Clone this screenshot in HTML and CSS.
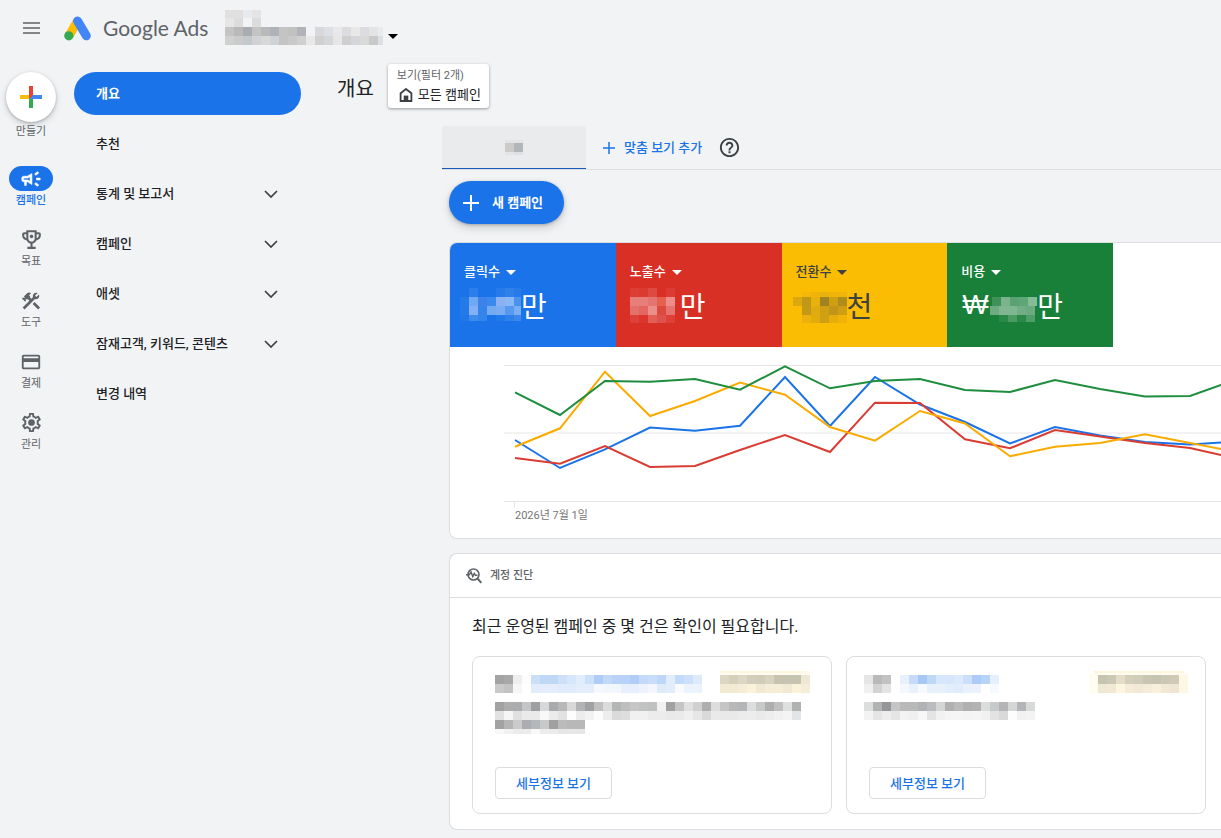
FILE: index.html
```html
<!DOCTYPE html>
<html lang="ko">
<head>
<meta charset="utf-8">
<meta name="viewport" content="width=device-width, initial-scale=1">
<title>개요 - Google Ads</title>
<link rel="stylesheet" href="styles.css">
</head>
<body>
<header class="topbar">
  <button class="icon-button" aria-label="메뉴">
    <svg width="18" height="12" viewBox="0 0 18 12"><path d="M0 1h17M0 6h17M0 11h17" stroke="#5f6368" stroke-width="1.6"/></svg>
  </button>
  <a class="brand" href="#">
    <svg width="28" height="25" viewBox="0 0 28 25">
      <path d="M5 20 13.5 5" stroke="#fbbc04" stroke-width="9"/>
      <path d="M13.6 5 22.3 19.8" stroke="#4285f4" stroke-width="9" stroke-linecap="round"/>
      <circle cx="4.8" cy="19.8" r="4.6" fill="#34a853"/>
    </svg>
    <span class="brand-name">Google Ads</span>
  </a>
  <button class="account" aria-label="계정">
    <svg class="mosaic" width="158" height="36" data-rows="0 0 8 e0 e0 e8ebee e4; 0 8 9 e6 dc - dc; 0 17 9 c4 b9 a9adb2 c4 b9 afb2b8 c4 c1 b1b3b9 - d8d8dc dcdfe4 e8 dcdce0 e8 dcdce0 e4 e8ebee; 0 26 9 d0 cb c3c8cb d0d2d6 d8 d0d3d6 c4 c9 d0 e8 d0 d4d7da e6 cf d5d6da d9 c9 dde0e3"></svg>
    <span class="caret"></span>
  </button>
</header>

<div class="shell">
  <nav class="rail" aria-label="기본 메뉴">
    <a class="rail-create" href="#">
      <span class="fab">
        <svg width="22" height="22" viewBox="0 0 22 22"><path fill="#ea4335" d="M9 0h4v11l-4 2z"/><path fill="#fbbc04" d="M0 9h9v4H0z"/><path fill="#34a853" d="M9 13l4-3v12H9z"/><path fill="#4285f4" d="M13 9h9v4H10z"/></svg>
      </span>
      만들기
    </a>
    <a class="rail-item is-active" href="#">
      <span class="rail-icon"><svg width="22" height="22" viewBox="0 0 24 24"><path d="M18 11v2h4v-2h-4zm-2 6.61c.96.71 2.21 1.65 3.2 2.39.4-.53.8-1.07 1.2-1.6-.99-.74-2.24-1.68-3.2-2.4-.4.54-.8 1.08-1.2 1.61zM20.4 5.6c-.4-.53-.8-1.07-1.2-1.6-.99.74-2.24 1.68-3.2 2.4.4.53.8 1.07 1.2 1.6.96-.72 2.21-1.65 3.2-2.4zM4 9c-1.1 0-2 .9-2 2v2c0 1.1.9 2 2 2h1v4h2v-4h1l5 3V6L8 9H4zm5.03 1.71L11 9.53v4.94l-1.97-1.18-.48-.29H4v-2h4.55l.48-.29z" stroke="currentColor" stroke-width=".7"/></svg></span>
      캠페인
    </a>
    <a class="rail-item" href="#">
      <span class="rail-icon"><svg width="25" height="25" viewBox="0 0 24 24"><path d="M19 5h-2V3H7v2H5c-1.1 0-2 .9-2 2v1c0 2.55 1.92 4.63 4.39 4.94.63 1.5 1.98 2.63 3.61 2.96V19H8v2h8v-2h-3v-3.1c1.63-.33 2.98-1.46 3.61-2.96C19.08 12.63 21 10.55 21 8V7c0-1.1-.9-2-2-2zM5 8V7h2v3.82C5.84 10.4 5 9.3 5 8zm7 6c-1.65 0-3-1.35-3-3V5h6v6c0 1.65-1.35 3-3 3zm7-6c0 1.3-.84 2.4-2 2.82V7h2v1z"/><circle cx="12" cy="9" r="1.700"/></svg></span>
      목표
    </a>
    <a class="rail-item" href="#">
      <span class="rail-icon"><svg width="22" height="22" viewBox="0 0 24 24"><path d="m13.78 15.3 6 6 2.11-2.16-6-6zM17.5 10c1.93 0 3.5-1.57 3.5-3.5 0-.58-.16-1.12-.41-1.6l-2.7 2.7-1.49-1.49 2.7-2.7c-.48-.25-1.02-.41-1.6-.41C15.57 3 14 4.57 14 6.5c0 .41.08.8.21 1.16l-1.85 1.85-1.78-1.78.71-.71-1.41-1.41L12 3.49c-1.17-1.17-3.07-1.17-4.24 0L4.22 7.03l1.41 1.41H2.81l-.71.71 3.54 3.54.71-.71V9.15l1.41 1.41.71-.71 1.78 1.78-7.41 7.41 2.12 2.12L16.34 9.79c.36.13.75.21 1.16.21z"/></svg></span>
      도구
    </a>
    <a class="rail-item" href="#">
      <span class="rail-icon"><svg width="22" height="22" viewBox="0 0 24 24"><path d="M20 4H4c-1.11 0-1.99.89-1.99 2L2 18c0 1.11.89 2 2 2h16c1.11 0 2-.89 2-2V6c0-1.11-.89-2-2-2zm0 14H4v-6h16v6zm0-10H4V6h16v2z"/></svg></span>
      결제
    </a>
    <a class="rail-item" href="#">
      <span class="rail-icon"><svg width="23" height="23" viewBox="0 0 24 24"><path d="M19.43 12.98c.04-.32.07-.64.07-.98 0-.34-.03-.66-.07-.98l2.11-1.65c.19-.15.24-.42.12-.64l-2-3.46c-.09-.16-.26-.25-.44-.25-.06 0-.12.01-.17.03l-2.49 1c-.52-.4-1.08-.73-1.69-.98l-.38-2.65C14.46 2.18 14.25 2 14 2h-4c-.25 0-.46.18-.49.42l-.38 2.65c-.61.25-1.17.59-1.69.98l-2.49-1c-.06-.02-.12-.03-.18-.03-.17 0-.34.09-.43.25l-2 3.46c-.13.22-.07.49.12.64l2.11 1.65c-.04.32-.07.65-.07.98 0 .33.03.66.07.98l-2.11 1.65c-.19.15-.24.42-.12.64l2 3.46c.09.16.26.25.44.25.06 0 .12-.01.17-.03l2.49-1c.52.4 1.08.73 1.69.98l.38 2.65c.03.24.24.42.49.42h4c.25 0 .46-.18.49-.42l.38-2.65c.61-.25 1.17-.59 1.69-.98l2.49 1c.06.02.12.03.18.03.17 0 .34-.09.43-.25l2-3.46c.12-.22.07-.49-.12-.64l-2.11-1.65zm-1.98-1.71c.04.31.05.52.05.73 0 .21-.02.43-.05.73l-.14 1.13.89.7 1.08.84-.7 1.21-1.27-.51-1.04-.42-.9.68c-.43.32-.84.56-1.25.73l-1.06.43-.16 1.13-.2 1.35h-1.4l-.19-1.35-.16-1.13-1.06-.43c-.43-.18-.83-.41-1.23-.71l-.91-.7-1.06.43-1.27.51-.7-1.21 1.08-.84.89-.7-.14-1.13c-.03-.31-.05-.54-.05-.74s.02-.43.05-.73l.14-1.13-.89-.7-1.08-.84.7-1.21 1.27.51 1.04.42.9-.68c.43-.32.84-.56 1.25-.73l1.06-.43.16-1.13.2-1.35h1.39l.19 1.35.16 1.13 1.06.43c.43.18.83.41 1.23.71l.91.7 1.06-.43 1.27-.51.7 1.21-1.07.85-.89.7.14 1.13z"/><circle cx="12" cy="12" r="3.5"/></svg></span>
      관리
    </a>
  </nav>

  <nav class="sections" aria-label="캠페인 메뉴">
    <a class="section is-active" href="#">개요</a>
    <a class="section" href="#">추천</a>
    <a class="section" href="#">통계 및 보고서 <svg class="chevron" width="14" height="8" viewBox="0 0 14 8"><path d="m1 1 6 6 6-6"/></svg></a>
    <a class="section" href="#">캠페인 <svg class="chevron" width="14" height="8" viewBox="0 0 14 8"><path d="m1 1 6 6 6-6"/></svg></a>
    <a class="section" href="#">애셋 <svg class="chevron" width="14" height="8" viewBox="0 0 14 8"><path d="m1 1 6 6 6-6"/></svg></a>
    <a class="section" href="#">잠재고객, 키워드, 콘텐츠 <svg class="chevron" width="14" height="8" viewBox="0 0 14 8"><path d="m1 1 6 6 6-6"/></svg></a>
    <a class="section" href="#">변경 내역</a>
  </nav>

  <main class="main">
    <div class="title-row">
      <h1 class="title">개요</h1>
      <button class="view-chip">
        <span class="view-caption">보기(필터 2개)</span>
        <span class="view-name">
          <svg width="14" height="14" viewBox="0 0 14 14"><path d="M1.6 13V5.200L7 1l5.400 4.200V13z" fill="none" stroke="#3c4043" stroke-width="1.800"/><path d="M4.700 7.600h4.600V13H4.700z" fill="#3c4043"/></svg>
          모든 캠페인
        </span>
      </button>
    </div>

    <div class="content">
      <div class="tabs">
        <button class="tab" aria-label="보기 1">
          <svg class="mosaic" width="18" height="15" data-rows="0 0 3 e3e4e4 e2e4e5; 0 3 9 cdcbca b1b6bb; 0 12 3 e3e4e4 dde1e5"></svg>
        </button>
        <button class="add-view">
          <svg width="12" height="12" viewBox="0 0 12 12"><path d="M6 0v12M0 6h12" stroke="#1a73e8" stroke-width="1.5"/></svg>
          맞춤 보기 추가
        </button>
        <button class="icon-button" aria-label="도움말">
          <svg width="23" height="23" viewBox="0 0 24 24" fill="#3c4043"><path d="M11 18h2v-2h-2v2zm1-16C6.48 2 2 6.48 2 12s4.48 10 10 10 10-4.48 10-10S17.52 2 12 2zm0 18c-4.41 0-8-3.59-8-8s3.59-8 8-8 8 3.59 8 8-3.59 8-8 8zm0-14c-2.21 0-4 1.79-4 4h2c0-1.1.9-2 2-2s2 .9 2 2c0 2-3 1.75-3 5h2c0-2.25 3-2.5 3-5 0-2.21-1.79-4-4-4z"/></svg>
        </button>
      </div>

      <div class="panels">
        <button class="new-campaign">
          <svg width="16" height="16" viewBox="0 0 16 16"><path d="M8 0v16M0 8h16" stroke="#fff" stroke-width="2"/></svg>
          새 캠페인
        </button>

        <section class="card">
          <div class="metrics">
            <div class="metric metric-blue">
              <button class="metric-name">클릭수 <span class="caret"></span></button>
              <div class="metric-value">
                <svg class="mosaic" width="61" height="36" data-rows="0 1 9 - 2c7eea - - 267aea 3080eb 267aea; 0 10 9 257ae9 70a9f3 3c82ea 3a8aee 8cb1f3 88b8f5 4a92ee; 0 19 9 257ae9 84b1f4 3583eb 73aaf2 79acf2 5799ef 79aef3; 0 28 6 2177e9 3f8aed 3384ec - 2279e9 3080ec 3b87ec"></svg>만
              </div>
            </div>
            <div class="metric metric-red">
              <button class="metric-name">노출수 <span class="caret"></span></button>
              <div class="metric-value">
                <svg class="mosaic" width="54" height="36" data-rows="4 1 9 dc3d35 db3a31 de4941 - dc3b33; 4 10 9 e77e79 e77e79 e57470 e5604f ec8d8a; 4 19 9 e4706a e36660 ec8f88 dd4841 e57470; 4 28 9 dc4038 db352c e25f57 df524b dc4038"></svg>만
              </div>
            </div>
            <div class="metric metric-yellow">
              <button class="metric-name">전환수 <span class="caret"></span></button>
              <div class="metric-value">
                <svg class="mosaic" width="55" height="36" data-rows="1 5 5 - f4b809 f0b30a eab20f f0b30a f0b50a; 1 10 9 dca80f c19716 e8b10c a08320 cf9f13 af8c1c; 1 19 9 - c49915 e0ab0f d0a012 c09518 cf9f13; 1 28 8 - ecb20b e2ac0d cfa013 e5ae0d f0b30a"></svg>천
              </div>
            </div>
            <div class="metric metric-green">
              <button class="metric-name">비용 <span class="caret"></span></button>
              <div class="metric-value metric-money">
                <span class="currency">₩</span><svg class="mosaic" width="47" height="36" data-rows="2 10 9 3f915a 7bb38d 5aa272 5ea577 85bb96; 0 19 9 6dab80 80b692 80b692 72ae85 6cab80; 0 28 7 - 2a8948 4a9a63 2a8948 4f9d68"></svg>만
              </div>
            </div>
          </div>
          <div class="chart">
            <svg class="plot" viewBox="0 0 771 161" preserveAspectRatio="none" role="img" aria-label="실적 추이">
              <path class="grid-line" d="M54 18.500H771M54 86H771M54 154.500H771M64.500 154V160"/>
              <polyline stroke="#1a73e8" points="65,93 110,121 155,102.300 200,80.500 245,83.700 290,78.700 335,30 380,79 425,30 470,57.500 515,75 560,96.500 605,80 650,88.500 695,95 740,97.500 771,95.500 785,95"/>
              <polyline stroke="#d93c32" points="65,111 110,116.700 155,99 200,120 245,119 290,103 335,88 380,105 425,55.700 470,56 515,92.300 560,101.300 605,83 650,89.500 695,96 740,101 771,108 785,111"/>
              <polyline stroke="#f9ab00" points="65,99.700 110,81.300 155,24.700 200,69 245,54 290,35.500 335,47.700 380,80 425,93.700 470,64 515,76.500 560,109.300 605,99.800 650,96 695,87.300 740,96 771,102 785,104.500"/>
              <polyline stroke="#1e8e3e" points="65,45.300 110,68 155,34 200,34.700 245,32 290,42.700 335,19.300 380,41.300 425,34 470,32 515,43 560,45 605,33 650,42 695,49.500 740,49 771,38 785,33"/>
            </svg>
            <p class="chart-date">2026년 7월 1일</p>
          </div>
        </section>

        <section class="card">
          <header class="card-header">
            <svg width="18" height="17" viewBox="0 0 18 17" fill="none" stroke="#5f6368"><circle cx="8.500" cy="7.500" r="5.500" stroke-width="1.600"/><path d="m12.500 11.500 3.800 4.300" stroke-width="2"/><path d="M1 7.800h3.300L6 5 7.800 9.600 9.300 6.400 10.500 8.200H12.500" stroke-width="1.500"/></svg>
            <h2 class="card-title">계정 진단</h2>
          </header>
          <div class="card-body">
            <p class="lead">최근 운영된 캠페인 중 몇 건은 확인이 필요합니다.</p>
            <div class="issues">
              <article class="issue">
                <div class="issue-top">
                  <svg class="mosaic" width="207" height="22" data-rows="0 4 9 a3 a8 ee fc ccdff8 c0d8f8 c0d8f8 cde0f8 d6e6fb e2edfc cde0fa aeccf5 c1d8f7 b8d3f7 b8d3f7 afcdf6 c4dafa c8ddf9 bed7f8 e2edfc c4dafa cce0fa dceafc; 0 13 9 c9 c3 f6 - e2edfc e5edfc e5edfc e0ebfb e0ecfb e3edfb e3edfb f5f8fe f2f7fd f2f7fd e8effc e8effc edf3fd f3f7fd dfebfb e2edfb f8fafe ebf3fd ebf3fd"></svg>
                  <svg class="mosaic" width="90" height="22" data-rows="0 0 2 fff5dc fff5dc fff5dc fff5dc fff5dc fff5dc fff5dc fff5dc fff5dc fff8e6; 0 2 2 fffdf2 fffdf2 fffdf2 fffdf2 fffdf2 fffdf2 fffdf2 fffdf2 fffdf2 fffdf2; 0 4 9 ddd6c3 d6cfbd ddd6c3 d3cdbd cfccb8 d8d3bf c6c4b1 c6c4b1 c6c4b1 eee7d3; 0 13 9 f3ead4 f3ead4 f5edd8 faf2d9 f0e9d3 f5edd8 f5edd8 f0e9d3 faf2d9 f5edd8"></svg>
                </div>
                <svg class="mosaic issue-text" width="306" height="32" data-rows="0 0 9 a2 ad abacae c5 9e9fa1 d8 a9aaac b8 d8 b2b3b5 a0a1a3 c0 dadbdb b5 bcbebf c6 c1c3c3 c0 f1 a0a1a3 c5 e0 d0 ae dd c5 b8 b4b5b7 dcdddd c7c9c9 adaeb0 c0 dedfdf b1; 0 9 9 e2 f6 e0 ea ea f8 eb e2 fd ec f2 fc ed da dd f1 f1 ec ec e9 ea f0 e6 d9 ea e9 e9 ec ed ea ed f1 f4 e2e5e5; 0 18 9 a2 b5 cb acadb0 b5b8bb c8caca a0 bb b8 b8; 0 27 5 f8 f1 eb eb f8 ec eb e6 e8 e6"></svg>
                <button class="outline-button">세부정보 보기</button>
              </article>
              <article class="issue">
                <div class="issue-top">
                  <svg class="mosaic" width="130" height="22" data-rows="-5 4 9 e5 b9 c2 - e8f0fc c5dbf9 a5c8f5 c0d8f8 d7e6fb d7e6fb dceafc cbdffa accbf6 b7d3f8 e8effc; -5 13 9 f0 d3 e4 - f4f8fe e9f1fc f6f9fe e8f0fc e8f0fc e3edfb e0ebfb e9f1fd ebf2fd - f6f9fe"></svg>
                  <svg class="mosaic" width="94" height="22" data-rows="4 0 2 fff5dc fff5dc fff5dc fff5dc fff5dc fff5dc fff5dc fff5dc fff5dc fff5dc; -1 2 2 fffdf2 fffdf2 fffdf2 fffdf2 fffdf2 fffdf2 fffdf2 fffdf2 fffdf2 fffdf2 fffdf2; -1 4 9 fffdf0 c6c4b1 cbc8b5 e5dcc7 d3cfba cfccb7 c8c5b2 c6c4b1 cbc7b5 d0c9b6 fdf7e6; -1 13 9 fffdf0 efe8d3 f1e9d5 fdf6de f4ecd8 f0e9d3 f4ecd8 f7f1db f1e9d5 efe6d2 fdf7e6"></svg>
                </div>
                <svg class="mosaic issue-text" width="306" height="32" data-rows="-5 0 9 dd b1b2b4 959698 c5 b9 b9 b0b2b5 babcbf d5 b0 bb b0 b3 dbdcdc c7caca b4 d6 b4b5b9 d8dada; -5 9 9 f3 e5 ed e5 f3 edf0ef f7 e4 f1 f5 f5 f4 f5 f1 e3 d9 fd f1 f3"></svg>
                <button class="outline-button">세부정보 보기</button>
              </article>
            </div>
          </div>
        </section>
      </div>
    </div>
  </main>
</div>
<script src="mosaic.js"></script>
</body>
</html>
```

FILE: styles.css
```css
* {
  box-sizing: border-box;
}

body {
  margin: 0;
  overflow-x: hidden;
  background: #f1f3f5;
  color: #202124;
  font-family: Roboto, "Noto Sans CJK KR", sans-serif;
  font-size: 13px;
  line-height: 20px;
}

button {
  padding: 0;
  border: 0;
  background: none;
  color: inherit;
  font: inherit;
  cursor: pointer;
}

a {
  color: inherit;
  text-decoration: none;
}

h1,
h2,
p {
  margin: 0;
}

svg {
  display: block;
  flex: none;
}

.caret {
  border: 5px solid transparent;
  border-top-color: currentColor;
  border-bottom: 0;
}

.icon-button {
  display: flex;
}

/* Top bar */
.topbar {
  display: flex;
  align-items: center;
  height: 56px;
  padding-left: 23px;
}

.brand {
  display: flex;
  align-items: center;
  gap: 11px;
  margin-left: 23px;
}

.brand-name {
  color: #5f6368;
  font-family: Lato, sans-serif;
  font-size: 21px;
  line-height: 28px;
}

.account {
  display: flex;
  align-items: center;
  gap: 5px;
  margin-left: 17px;
  color: #000;
}

.account .caret {
  margin-top: 16px;
}

.shell {
  display: flex;
  align-items: flex-start;
}

/* Icon rail */
.rail {
  display: flex;
  flex: none;
  flex-direction: column;
  gap: 18px;
  width: 62px;
  padding-top: 16px;
  color: #5f6368;
  font-size: 11px;
  line-height: 16px;
  text-align: center;
}

.rail-create,
.rail-item {
  display: flex;
  flex-direction: column;
  align-items: center;
  gap: 2px;
}

.rail-create {
  margin-bottom: 8px;
}

.fab {
  display: grid;
  place-items: center;
  width: 50px;
  height: 50px;
  border-radius: 50%;
  background: #fff;
  box-shadow: 0 1px 3px rgba(60, 64, 67, .3), 0 3px 6px rgba(60, 64, 67, .18);
}

.rail-icon {
  display: grid;
  place-items: center;
  width: 44px;
  height: 25px;
  border-radius: 13px;
  fill: currentColor;
}

.rail-item.is-active {
  color: #1a73e8;
  font-weight: 500;
}

.is-active .rail-icon {
  background: #1a73e8;
  color: #fff;
}

/* Section menu */
.sections {
  display: flex;
  flex: none;
  flex-direction: column;
  gap: 7px;
  width: 239px;
  padding: 16px 0 0 12px;
  font-weight: 500;
}

.section {
  display: flex;
  align-items: center;
  justify-content: space-between;
  height: 43px;
  padding: 0 23px 0 22px;
  border-radius: 22px;
}

.section.is-active {
  background: #1a73e8;
  color: #fff;
  font-weight: 700;
}

.chevron {
  fill: none;
  stroke: #3c4043;
  stroke-width: 1.7;
}

/* Main column */
.main {
  flex: 1;
  min-width: 0;
  padding: 8px 0 8px 36px;
}

.title-row {
  display: flex;
  align-items: center;
  gap: 14px;
}

.title {
  padding-top: 6px;
  font-size: 20px;
  font-weight: 400;
  line-height: 28px;
}

.view-chip {
  display: flex;
  flex-direction: column;
  padding: 2px 8px 2px 9px;
  border-radius: 3px;
  background: #fff;
  box-shadow: 0 1px 3px rgba(60, 64, 67, .5);
  color: #202124;
  text-align: left;
}

.view-caption {
  color: #5f6368;
  font-size: 11px;
  line-height: 20px;
}

.view-name {
  display: flex;
  align-items: center;
  gap: 5px;
  padding: 0 0 2px 2px;
  line-height: 18px;
}

.content {
  margin: 18px 0 0 105px;
}

.tabs {
  display: flex;
  align-items: center;
  height: 44px;
  border-bottom: 1px solid #dadce0;
}

.tab {
  display: grid;
  align-self: stretch;
  place-items: center;
  width: 144px;
  border-bottom: 1px solid #185abc;
  border-radius: 3px 3px 0 0;
  background: #e9ebed;
}

.add-view {
  display: flex;
  align-items: center;
  gap: 9px;
  margin: 0 16px 0 17px;
  color: #1a73e8;
  font-weight: 500;
}

.panels {
  padding: 11px 0 0 7px;
}

.new-campaign {
  display: flex;
  align-items: center;
  gap: 13px;
  height: 43px;
  margin-bottom: 18px;
  padding: 0 21px 0 14px;
  border-radius: 22px;
  background: #1a73e8;
  box-shadow: 0 1px 3px rgba(60, 64, 67, .3), 0 4px 8px rgba(60, 64, 67, .2);
  color: #fff;
  font-weight: 700;
}

.card {
  overflow: hidden;
  margin-bottom: 14px;
  border: 1px solid #dadce0;
  border-right: 0;
  border-radius: 8px 0 0 8px;
  background: #fff;
}

.card:last-child {
  margin-bottom: 0;
}

/* Metric tiles */
.metrics {
  display: grid;
  grid-template-columns: repeat(4, 1fr);
  max-width: 663px;
}

.metric {
  padding: 19px 0 24px;
  color: #fff;
}

.metric-blue {
  background: #1a73e8;
}

.metric-red {
  background: #d93025;
}

.metric-yellow {
  background: #fbbc04;
  color: #3c4043;
}

.metric-green {
  background: #188038;
}

.metric-name {
  display: flex;
  align-items: center;
  gap: 6px;
  padding-left: 14px;
  font-weight: 500;
}

.metric-value {
  display: flex;
  align-items: center;
  height: 36px;
  margin-top: 5px;
  padding-left: 10px;
  font-family: "Noto Sans CJK KR", sans-serif;
  font-size: 28px;
  line-height: 36px;
}

.metric-money {
  padding-left: 15px;
}

.currency {
  min-width: 28px;
  font-family: "Liberation Sans", sans-serif;
}

/* Chart */
.plot {
  width: 100%;
  height: 161px;
  fill: none;
  stroke-width: 2;
}

.grid-line {
  stroke: #e6e6e6;
  stroke-width: 1;
}

.chart-date {
  padding: 0 0 14px 65px;
  color: #757575;
  font-size: 11px;
  line-height: 16px;
}

/* Diagnostics */
.card-header {
  display: flex;
  align-items: center;
  gap: 7px;
  height: 44px;
  padding-left: 15px;
  border-bottom: 1px solid #dadce0;
}

.card-title {
  color: #5f6368;
  font-size: 11px;
  font-weight: 500;
}

.card-body {
  padding: 17px 15px 15px 22px;
}

.lead {
  font-size: 16px;
  line-height: 24px;
}

.issues {
  display: grid;
  grid-template-columns: 1fr 1fr;
  gap: 14px;
  margin-top: 17px;
}

.issue {
  padding: 14px 21px 14px 22px;
  border: 1px solid #dadce0;
  border-radius: 8px;
}

.issue .mosaic {
  overflow: visible;
}

.issue-top {
  display: flex;
  justify-content: space-between;
}

.issue-text {
  margin: 9px 0 33px;
}

.outline-button {
  height: 32px;
  padding: 1px 20px 0;
  border: 1px solid #dadce0;
  border-radius: 4px;
  color: #1a73e8;
  font-weight: 500;
}
```

FILE: mosaic.js
```js
// Fills each .mosaic svg with 9px-wide blocks that mask private text.
// data-rows holds rows split by ";", each "x y height colour colour ...".
// A two-digit colour is a grey, "-" leaves a gap.
document.querySelectorAll('.mosaic').forEach(function (svg) {
  svg.dataset.rows.split(';').forEach(function (row) {
    var parts = row.trim().split(' ');
    parts.slice(3).forEach(function (colour, i) {
      if (colour === '-') return;
      var rect = document.createElementNS('http://www.w3.org/2000/svg', 'rect');
      rect.setAttribute('x', Number(parts[0]) + i * 9);
      rect.setAttribute('y', parts[1]);
      rect.setAttribute('width', 9);
      rect.setAttribute('height', parts[2]);
      rect.setAttribute('fill', '#' + (colour.length === 2 ? colour + colour + colour : colour));
      svg.appendChild(rect);
    });
  });
});
```
